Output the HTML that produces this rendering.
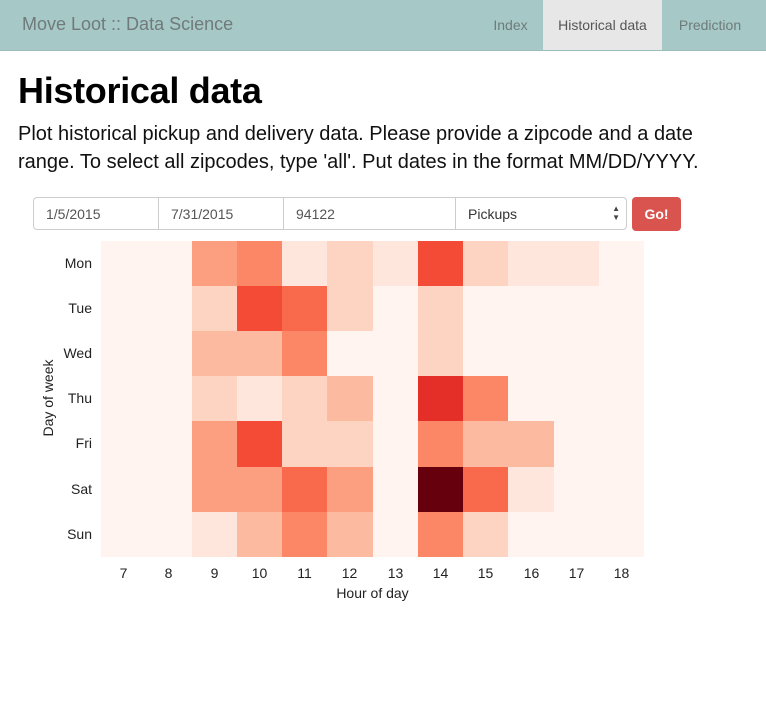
<!DOCTYPE html>
<html><head><meta charset="utf-8"><style>
body{margin:0;width:766px;height:709px;overflow:hidden;background:#fff;font-family:"Liberation Sans",Arial,sans-serif;position:relative}
.nav{position:absolute;left:0;top:0;width:766px;height:50px;background:#a6c9c7;border-bottom:1px solid #9bbdbb}
.brand{position:absolute;left:22px;top:14px;font-size:18px;color:#707a7a}
.ni{position:absolute;top:0;height:50px;line-height:50px;font-size:14px;color:#6f7a7a;text-align:center}
h1{position:absolute;left:18px;top:70px;margin:0;font-size:36px;font-weight:bold;color:#000;letter-spacing:-0.3px}
p{position:absolute;left:18px;top:120px;margin:0;width:712px;font-size:20px;line-height:28px;color:#111}
.in{position:absolute;top:197px;height:33px;border:1px solid #ccc;box-sizing:border-box;font-size:14px;color:#555;padding:8px 12px;background:#fff}
.btn{position:absolute;left:632px;top:197px;width:49px;height:34px;background:#d9534f;border-radius:4px;color:#fff;font-weight:bold;font-size:14px;text-align:center;line-height:34px}
.hm{position:absolute;left:101px;top:241px}
.c{position:absolute;width:45.3px;height:45.2px}
.yl{position:absolute;font-size:14px;color:#222;width:60px;text-align:right}
.xl{position:absolute;top:565px;font-size:14px;color:#222;width:45px;text-align:center}
</style></head><body>
<div class="nav"><div class="brand">Move Loot :: Data Science</div>
<div class="ni" style="left:478px;width:65px">Index</div>
<div class="ni" style="left:543px;width:119px;background:#e7e7e7;color:#555">Historical data</div>
<div class="ni" style="left:662px;width:96px">Prediction</div></div>
<h1>Historical data</h1>
<p>Plot historical pickup and delivery data. Please provide a zipcode and a date range. To select all zipcodes, type 'all'. Put dates in the format MM/DD/YYYY.</p>
<div class="in" style="left:33px;width:126px;border-radius:4px 0 0 4px">1/5/2015</div>
<div class="in" style="left:158px;width:126px">7/31/2015</div>
<div class="in" style="left:283px;width:173px">94122</div>
<div class="in" style="left:455px;width:172px;border-radius:0 4px 4px 0;color:#333">Pickups<span style="position:absolute;right:6px;top:6px;font-size:8px;line-height:9px;color:#444">▲<br>▼</span></div>
<div class="btn">Go!</div>
<div class="hm" id="hm"></div>
<div class="yl" style="left:32px;top:255px">Mon</div>
<div class="yl" style="left:32px;top:300px">Tue</div>
<div class="yl" style="left:32px;top:345px">Wed</div>
<div class="yl" style="left:32px;top:390px">Thu</div>
<div class="yl" style="left:32px;top:435px">Fri</div>
<div class="yl" style="left:32px;top:481px">Sat</div>
<div class="yl" style="left:32px;top:526px">Sun</div>
<div style="position:absolute;left:-2px;top:390px;width:100px;text-align:center;font-size:14px;color:#222;transform:rotate(-90deg)">Day of week</div>
<div class="xl" style="left:101px">7</div><div class="xl" style="left:146px">8</div><div class="xl" style="left:192px">9</div><div class="xl" style="left:237px">10</div><div class="xl" style="left:282px">11</div><div class="xl" style="left:327px">12</div><div class="xl" style="left:373px">13</div><div class="xl" style="left:418px">14</div><div class="xl" style="left:463px">15</div><div class="xl" style="left:509px">16</div><div class="xl" style="left:554px">17</div><div class="xl" style="left:599px">18</div>
<div style="position:absolute;left:300px;top:585px;width:145px;text-align:center;font-size:14px;color:#222">Hour of day</div>
<script>
var C={A:'#fff4ef',B:'#fee6dc',C:'#fdd3c2',D:'#fcbaa0',E:'#fc9f80',F:'#fb8767',G:'#f9694c',H:'#f34b36',I:'#e42f28',J:'#67000d'};
var R=["AAEFBCBHCBBA","AACHGCACAAAA","AADDFAACAAAA","AACBCDAIFAAA","AAEHCCAFDDAA","AAEEGEAJGBAA","AABDFDAFCAAA"];
var h='';R.forEach(function(r,i){for(var j=0;j<12;j++)h+='<div class="c" style="left:'+(j*45.25)+'px;top:'+(i*45.1)+'px;background:'+C[r[j]]+'"></div>';});
document.getElementById('hm').innerHTML=h;
</script>
</body></html>
